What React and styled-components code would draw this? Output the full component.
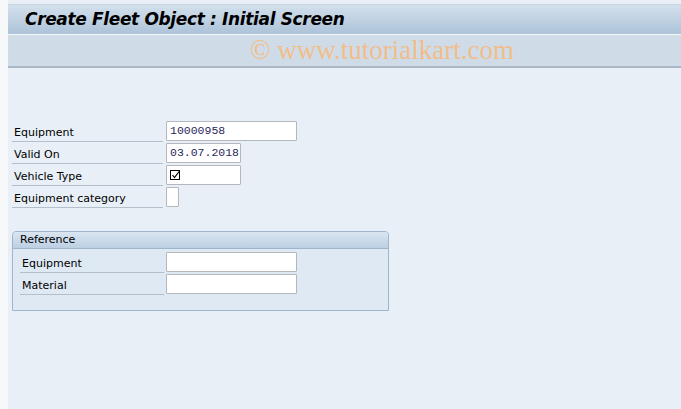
import React from "react"
import styled, { createGlobalStyle } from "styled-components"

const GlobalStyle = createGlobalStyle`
  html, body {
    margin: 0;
    padding: 0;
    background: #f7f8fa;
  }
  body {
    font-family: Tahoma, "DejaVu Sans", sans-serif;
  }
`

const Window = styled.div`
  margin-left: 8px;
  padding-top: 4px;
  width: 673px;
  height: 405px;
  display: flex;
  flex-direction: column;
  background: #e8eff7;
`

const TitleBar = styled.div`
  height: 31px;
  display: flex;
  align-items: center;
  padding-left: 17px;
  padding-bottom: 1px;
  border-top: 1px solid #c8d4e0;
  border-bottom: 1px solid #f4f8fb;
  background: linear-gradient(#d3e0ec, #adc3d9);
  box-sizing: border-box;
  font-family: "DejaVu Sans", sans-serif;
  font-weight: bold;
  font-style: italic;
  font-size: 17px;
  color: #000;
  letter-spacing: -0.35px;
`

const Toolbar = styled.div`
  height: 33px;
  display: flex;
  justify-content: center;
  align-items: center;
  background: #cfdce7;
  border-bottom: 2px solid #a9b8c7;
  box-sizing: border-box;
  padding-left: 75px;
`

const Watermark = styled.span`
  font-family: "Liberation Serif", serif;
  font-size: 27px;
  color: #f2bd8a;
`

const Body = styled.div`
  flex: 1;
  padding: 52px 0 0 4px;
  font-family: "DejaVu Sans", sans-serif;
  font-size: 11px;
  color: #000;
`

const Row = styled.div`
  display: flex;
  align-items: center;
  height: 22px;
`

const Label = styled.div`
  width: ${p => p.$width || 154}px;
  height: 22px;
  padding-top: 4px;
  line-height: 17px;
  box-sizing: border-box;
  padding-left: 2px;
  border-bottom: 1px solid #b3bfcb;
  align-self: flex-start;
  margin-right: ${p => p.$gap || 0}px;
`

const Field = styled.div`
  width: ${p => p.$width}px;
  height: 20px;
  box-sizing: border-box;
  background: #fff;
  border: 1px solid #b4b8bd;
  border-radius: 1px;
  font-family: "Liberation Mono", monospace;
  font-size: 11.5px;
  line-height: 18px;
  padding-left: 3px;
  color: #2a1f5c;
  display: flex;
  align-items: center;
  margin-top: 1px;
  align-self: flex-start;
`

const Group = styled.div`
  margin-top: 23px;
  width: 377px;
  height: 80px;
  box-sizing: border-box;
  border: 1px solid #9fb5cb;
  border-radius: 4px 4px 0 0;
  background: #dfe9f3;
`

const GroupHead = styled.div`
  height: 17px;
  line-height: 16px;
  padding-left: 7px;
  box-sizing: border-box;
  border-bottom: 1px solid #9fb5cb;
  border-radius: 3px 3px 0 0;
  background: linear-gradient(#dae6f1, #bccfe2);
`

const GroupBody = styled.div`
  padding: 2px 0 0 7px;
`

const Check = () => (
  <svg width="11" height="11" viewBox="0 0 11 11">
    <rect x="0.5" y="0.5" width="9" height="9" fill="none" stroke="#000" />
    <path d="M2.5 5 L4.5 7.5 L9.5 1" fill="none" stroke="#000" strokeWidth="1.2" />
  </svg>
)

export default function App() {
  return (
    <>
      <GlobalStyle />
      <Window>
        <TitleBar>Create Fleet Object : Initial Screen</TitleBar>
        <Toolbar>
          <Watermark>© www.tutorialkart.com</Watermark>
        </Toolbar>
        <Body>
          <Row>
            <Label $width={151} $gap={3}>Equipment</Label>
            <Field $width={131}>10000958</Field>
          </Row>
          <Row>
            <Label $width={151} $gap={3}>Valid On</Label>
            <Field $width={75}>03.07.2018</Field>
          </Row>
          <Row>
            <Label $width={151} $gap={3}>Vehicle Type</Label>
            <Field $width={75}><Check /></Field>
          </Row>
          <Row>
            <Label $width={151} $gap={3}>Equipment category</Label>
            <Field $width={13} />
          </Row>
          <Group>
            <GroupHead>Reference</GroupHead>
            <GroupBody>
              <Row>
                <Label $width={144} $gap={2}>Equipment</Label>
                <Field $width={131} />
              </Row>
              <Row>
                <Label $width={144} $gap={2}>Material</Label>
                <Field $width={131} />
              </Row>
            </GroupBody>
          </Group>
        </Body>
      </Window>
    </>
  )
}
